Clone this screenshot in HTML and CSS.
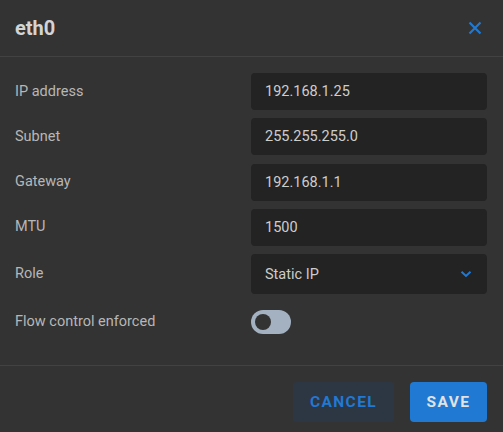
FILE: index.html
```html
<!DOCTYPE html>
<html>
<head>
<meta charset="utf-8">
<link rel="stylesheet" href="styles.css">
</head>
<body>
<div class="dialog">
  <header class="dlg-header">
    <h1 class="dlg-title">eth0</h1>
    <button class="close-btn" aria-label="Close">
      <svg width="14" height="14" viewBox="0 0 14 14"><path d="M1.5 1.5 L12.5 12.5 M12.5 1.5 L1.5 12.5" stroke="#2079d2" stroke-width="2.2" fill="none"/></svg>
    </button>
  </header>
  <div class="dlg-body">
    <div class="form-row"><label class="lbl">IP address</label><div class="field">192.168.1.25</div></div>
    <div class="form-row"><label class="lbl">Subnet</label><div class="field">255.255.255.0</div></div>
    <div class="form-row"><label class="lbl">Gateway</label><div class="field">192.168.1.1</div></div>
    <div class="form-row"><label class="lbl">MTU</label><div class="field">1500</div></div>
    <div class="form-row select-row"><label class="lbl">Role</label><div class="field select">Static IP
      <svg class="chev" width="12" height="8" viewBox="0 0 12 8"><path d="M1.5 1.8 L6 6 L10.5 1.8" stroke="#2079d2" stroke-width="2" fill="none"/></svg></div></div>
    <div class="form-row toggle-row"><label class="lbl">Flow control enforced</label><div class="toggle"><span class="knob"></span></div></div>
  </div>
  <footer class="dlg-footer">
    <button class="btn btn-cancel">CANCEL</button>
    <button class="btn btn-save">SAVE</button>
  </footer>
</div>
</body>
</html>
```

FILE: styles.css
```css
html, body {
  margin: 0;
  padding: 0;
  background: #333333;
  height: 100%;
  overflow: hidden;
}
body {
  font-family: Roboto, "Liberation Sans", sans-serif;
}
.dlg-header {
  height: 56px;
  display: flex;
  align-items: center;
  justify-content: space-between;
  padding: 0 16px 0 15px;
  border-bottom: 1px solid #424242;
}
.dlg-title {
  margin: 0;
  font-size: 20px;
  font-weight: 700;
  color: #d4d4d4;
}
.close-btn {
  background: none;
  border: 0;
  padding: 0;
  margin-right: 5px;
  width: 14px;
  height: 14px;
  display: flex;
}
.dlg-body {
  padding: 16px 16px 31px 15px;
  display: flex;
  flex-direction: column;
  gap: 8.25px;
  border-bottom: 1px solid #424242;
}
.form-row {
  display: grid;
  grid-template-columns: 236px 236px;
  align-items: center;
}
.lbl {
  font-size: 14.5px;
  color: #b7b7b7;
  margin-top: -1px;
}
.field {
  height: 37px;
  box-sizing: border-box;
  background: #232323;
  border-radius: 4px;
  padding: 0 14px;
  display: flex;
  align-items: center;
  font-size: 14.5px;
  color: #cdcdcd;
}
.select {
  height: 40px;
  justify-content: space-between;
  padding-right: 15px;
}
.toggle-row {
  margin-top: 8px;
}
.toggle {
  width: 40px;
  height: 24px;
  border-radius: 12px;
  background: #a3b1c1;
  position: relative;
}
.knob {
  position: absolute;
  left: 4px;
  top: 4px;
  width: 16px;
  height: 16px;
  border-radius: 50%;
  background: #333333;
}
.dlg-footer {
  display: flex;
  justify-content: flex-end;
  gap: 16px;
  padding: 16px 16px 0 0;
}
.btn {
  height: 40px;
  border: 0;
  border-radius: 4px;
  font-family: Roboto, "Liberation Sans", sans-serif;
  font-size: 15.5px;
  font-weight: 700;
  letter-spacing: 1.4px;
  padding: 0;
}
.btn-cancel {
  width: 101px;
  background: #2d3743;
  color: #2079d2;
}
.btn-save {
  width: 77px;
  background: #2079d2;
  color: #e2e2e2;
}
```
